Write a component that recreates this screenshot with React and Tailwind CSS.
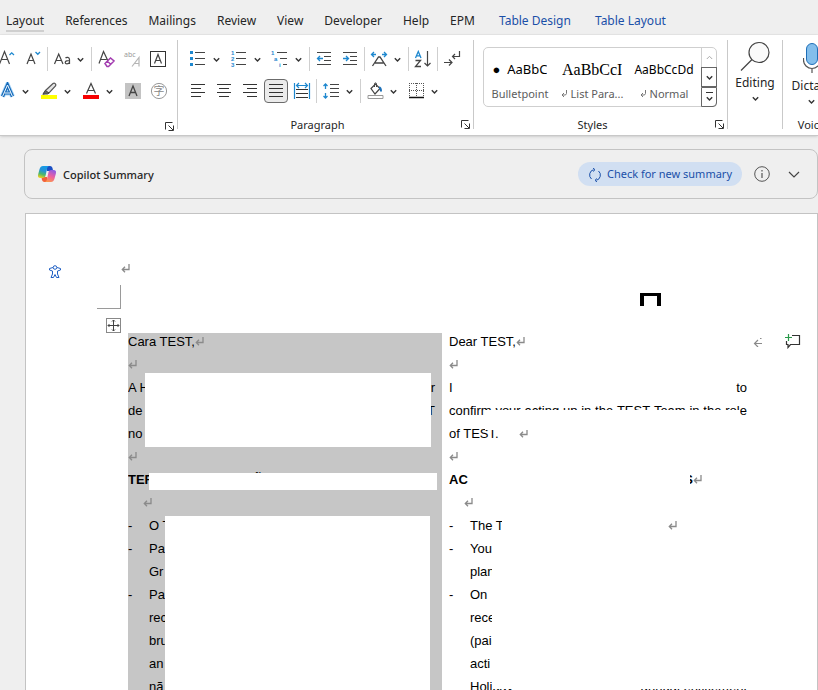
import React from "react";

const TABS = ["Layout", "References", "Mailings", "Review", "View", "Developer", "Help", "EPM"];
const TABLE_TABS = ["Table Design", "Table Layout"];

export default function App() {
  return (
    <div className="flex h-screen flex-col overflow-hidden bg-[#efefef] font-['Noto_Sans',sans-serif] text-xs text-[#252525]">
      <TabBar />
      <Ribbon />
      <main className="flex min-h-0 flex-1 flex-col pt-[13px] pl-6">
        <CopilotBar />
        <DocumentPage />
      </main>
    </div>
  );
}

function TabBar() {
  return (
    <nav className="flex h-[35px] shrink-0 gap-6 overflow-hidden border-b border-[#e6e6e6] pt-[11px] pl-1.5">
      <div className="flex shrink-0 gap-[21px]">
        {TABS.map((tab) => (
          <button
            key={tab}
            className={
              tab === "Layout"
                ? "h-[21px] shrink-0 border-b-2 border-[#cfcfcf]"
                : "h-[21px] shrink-0 border-b-2 border-transparent"
            }
          >
            {tab}
          </button>
        ))}
      </div>
      <div className="flex shrink-0 gap-6">
        {TABLE_TABS.map((tab) => (
          <button key={tab} className="h-[21px] shrink-0 border-b-2 border-transparent text-[#1a4fa8]">
            {tab}
          </button>
        ))}
      </div>
    </nav>
  );
}

/* ---------- Ribbon ---------- */

function Ribbon() {
  return (
    <header className="flex h-[101px] shrink-0 overflow-hidden border-b border-[#c8c8c8] bg-white pt-[5px] pb-1.5 shadow-sm">
      <Group className="w-[178px]" launcher="Font settings">
        <div className="flex flex-col gap-2 pt-[7px]">
          <Row>
            <Cluster>
              <Tool label="Increase font size"><GrowFont /></Tool>
              <Tool label="Decrease font size"><ShrinkFont /></Tool>
            </Cluster>
            <Sep />
            <Split label="Change case"><ChangeCase /></Split>
            <Sep />
            <Cluster>
              <Tool label="Clear formatting"><ClearFormat /></Tool>
              <Tool label="Phonetic guide"><Phonetic /></Tool>
              <Tool label="Character border"><CharBorder /></Tool>
            </Cluster>
          </Row>
          <Row>
            <div className="flex items-center gap-[9px]">
              <Split label="Text effects"><TextEffects /></Split>
              <Split label="Highlight colour"><Highlighter /></Split>
              <Split label="Font colour"><FontColor /></Split>
              <Cluster>
                <Tool label="Character shading"><CharShading /></Tool>
                <Tool label="Enclose characters"><Enclose /></Tool>
              </Cluster>
            </div>
          </Row>
        </div>
      </Group>

      <Group className="w-[296px]" title="Paragraph" launcher="Paragraph settings">
        <div className="flex flex-col gap-2 pt-[7px] pl-[11px]">
          <Row>
            <Cluster>
              <Split label="Bullets"><Bullets /></Split>
              <Split label="Numbering"><Numbering /></Split>
              <Split label="Multilevel list"><Multilevel /></Split>
            </Cluster>
            <Sep />
            <Cluster>
              <Tool label="Decrease indent"><Indent dir="left" /></Tool>
              <Tool label="Increase indent"><Indent dir="right" /></Tool>
            </Cluster>
            <Sep />
            <Split label="Asian layout"><AsianLayout /></Split>
            <Sep />
            <Tool label="Sort"><Sort /></Tool>
            <Sep />
            <Tool label="Show paragraph marks"><Marks /></Tool>
          </Row>
          <Row>
            <Cluster>
              <Tool label="Align left"><Lines rows={[[2, 16], [2, 12], [2, 16], [2, 12]]} /></Tool>
              <Tool label="Center"><Lines rows={[[2, 16], [4, 14], [2, 16], [4, 14]]} /></Tool>
              <Tool label="Align right"><Lines rows={[[2, 16], [6, 16], [2, 16], [6, 16]]} /></Tool>
              <button
                aria-label="Justify"
                aria-pressed="true"
                className="-mx-[3px] flex size-6 items-center justify-center rounded border border-[#6b6b6b] bg-[#ebebeb]"
              >
                <Lines rows={[[2, 16], [2, 16], [2, 16], [2, 16]]} />
              </button>
              <Tool label="Distribute"><Distribute /></Tool>
            </Cluster>
            <Sep />
            <Split label="Line spacing"><LineSpacing /></Split>
            <Sep />
            <Cluster>
              <Split label="Shading"><Bucket /></Split>
              <Split label="Borders"><Borders /></Split>
            </Cluster>
          </Row>
        </div>
      </Group>

      <Group className="w-[254px]" title="Styles" launcher="Styles pane">
        <div className="pt-[7px] pr-2.5 pl-[9px]">
          <StyleGallery />
        </div>
      </Group>

      <Group className="w-[55px]">
        <button className="flex w-full flex-col items-center pt-px">
          <svg className="h-[31px] w-[30px]" viewBox="0 0 30 31" fill="none" stroke="#444" strokeWidth="1.2">
            <circle cx="19" cy="11.5" r="10" fill="#fafafa" />
            <path d="M12 18.5 1 29.5" />
          </svg>
          <span className="mt-px leading-5">Editing</span>
          <span className="mt-0.5"><ChevronDown /></span>
        </button>
      </Group>

      <div className="flex w-[57px] shrink-0 flex-col">
        <button className="flex w-full flex-col items-center pt-0.5">
          <svg className="h-8 w-[18px]" viewBox="0 0 18 32" fill="none">
            <rect x="3.5" y="1.5" width="11" height="21" rx="5.5" fill="#83beec" stroke="#1f6fb8" />
            <path d="M.5 16v2a8.500 8.500 0 0 0 17 0v-2M9 26.500V31" stroke="#555" strokeWidth="1.200" />
          </svg>
          <span className="mt-0.5 leading-5">Dictate</span>
          <span className="mt-0.5"><ChevronDown /></span>
        </button>
        <span className="mt-auto -mb-1 text-center text-[11px] leading-4">Voice</span>
      </div>
    </header>
  );
}

function Group({ className, title, launcher, children }) {
  return (
    <section className={`flex shrink-0 flex-col border-r border-[#c9c9c9] ${className}`}>
      {children}
      {launcher && (
        <div className="mt-auto -mb-1 flex items-center">
          <h2 className="flex-1 text-center text-[11px] leading-4">{title}</h2>
          <button aria-label={launcher} className="flex w-4 justify-end pr-px">
            <svg className="size-3" viewBox="0 0 12 12" fill="none" stroke="#333">
              <path d="M1.500 8.500v-7h7M4.500 4.500l4.500 4.500M9.500 4.500v5h-5" />
            </svg>
          </button>
        </div>
      )}
    </section>
  );
}

function Row({ children }) {
  return <div className="flex h-6 items-center">{children}</div>;
}

function Cluster({ children }) {
  return <div className="flex items-center gap-2">{children}</div>;
}

function Sep() {
  return <div className="mx-[5px] h-6 w-px shrink-0 bg-[#cfcfcf]" />;
}

function Tool({ label, children }) {
  return (
    <button aria-label={label} className="shrink-0">
      {children}
    </button>
  );
}

function Split({ label, children }) {
  return (
    <div className="flex shrink-0 items-center gap-[3px]">
      <button aria-label={label}>{children}</button>
      <button aria-label={`${label} options`} className="flex w-3 justify-center">
        <ChevronDown />
      </button>
    </div>
  );
}

function StyleGallery() {
  return (
    <div className="flex h-[60px] rounded-[5px] border border-[#cfcfcf]">
      <div className="flex min-w-0 flex-1 text-black">
        <StyleItem name="Bulletpoint">
          <span className="text-[13px]">●&nbsp; AaBbC</span>
        </StyleItem>
        <StyleItem name="List Para..." linked>
          <span className="font-['Liberation_Serif',serif] text-base">AaBbCcI</span>
        </StyleItem>
        <StyleItem name="Normal" linked>
          <span className="text-xs">AaBbCcDd</span>
        </StyleItem>
      </div>
      <div className="-my-px -mr-px flex w-4 flex-col">
        <button aria-label="Previous styles" className="flex h-5 items-center justify-center border-l border-[#cfcfcf] text-[#aaa]">
          <svg className="size-[7px]" viewBox="0 0 7 7" fill="none" stroke="currentColor">
            <path d="M.8 5 3.500 2.300 6.200 5" />
          </svg>
        </button>
        <button aria-label="Next styles" className="flex h-5 items-center justify-center border border-[#666]">
          <ChevronDown />
        </button>
        <button aria-label="More styles" className="flex h-5 flex-col items-center justify-center gap-0.5 rounded-br border border-[#666]">
          <span className="h-px w-[7px] bg-[#333]" />
          <ChevronDown />
        </button>
      </div>
    </div>
  );
}

function StyleItem({ name, linked, children }) {
  return (
    <button className="flex w-[72px] shrink-0 flex-col items-center overflow-hidden px-1.5 pt-2.5">
      <span className="flex h-6 max-w-full items-center overflow-hidden whitespace-nowrap">{children}</span>
      <span className="flex items-center gap-1 text-[11px] leading-6 whitespace-nowrap text-[#5c5c5c]">
        {linked && (
          <svg className="h-2 w-1.5" viewBox="0 0 6 8" fill="none" stroke="#777">
            <path d="M5.500 0v3.500l-1 1.500H1M3 3 1 5l2 2" />
          </svg>
        )}
        {name}
      </span>
    </button>
  );
}

/* ---------- Icons ---------- */

function Icon({ children, narrow }) {
  return (
    <svg
      className={narrow ? "h-[18px] w-4" : "size-[18px]"}
      viewBox={narrow ? "2 0 16 18" : "0 0 18 18"}
      fill="none"
      stroke="#444"
      strokeWidth="1"
    >
      {children}
    </svg>
  );
}

function ChevronDown() {
  return (
    <svg className="block size-[7px]" viewBox="0 0 7 7" fill="none" stroke="#333" strokeWidth="1.4">
      <path d="M.8 2.200 3.500 4.900 6.200 2.200" />
    </svg>
  );
}

function GrowFont() {
  return (
    <Icon narrow>
      <path d="M1.500 14 6.500 1.500 11.500 14M3.200 9.500h6.600" strokeWidth="1.200" />
      <path d="m11.500 5 2.200-2.200L16 5" stroke="#1e88cf" strokeWidth="1.300" />
    </Icon>
  );
}

function ShrinkFont() {
  return (
    <Icon>
      <path d="M3 14 7 4l4 10M4.500 10.500h5" strokeWidth="1.200" />
      <path d="M11.500 2 13.800 4.300 16 2" stroke="#1e88cf" strokeWidth="1.300" />
    </Icon>
  );
}

function ChangeCase() {
  return (
    <Icon>
      <path d="M1.500 14 5.700 4 10 14M3 10.500h5.500" strokeWidth="1.200" />
      <path d="M12.500 8c1-1 4-1 4 1.500V14M16.500 10.500c-2 0-4.300.2-4.300 2s3.300 2 4.300-.3" strokeWidth="1.200" />
    </Icon>
  );
}

function ClearFormat() {
  return (
    <Icon>
      <path d="M2 13.500 6.500 1.500 11 11M3.500 9.500h6" strokeWidth="1.200" />
      <path d="m8 13.500 5.500-5.500 3.500 3-5.500 5.500H10zM10 11l3.500 3" fill="#fff" stroke="#a33cb0" strokeWidth="1.500" />
    </Icon>
  );
}

function Phonetic() {
  return (
    <Icon>
      <text x="1" y="7" fontSize="7" fill="#999" stroke="none">abc</text>
      <path d="m9 16.500 7-9v9M11 13.500h5" stroke="#b5b5b5" strokeWidth="1.200" />
    </Icon>
  );
}

function CharBorder() {
  return (
    <Icon>
      <rect x="1.500" y="1.500" width="15" height="15" stroke="#333" />
      <path d="m5.500 13.500 3.500-9 3.500 9M6.700 10.500h4.600" strokeWidth="1.200" />
    </Icon>
  );
}

function TextEffects() {
  return (
    <Icon narrow>
      <path d="M4.500 14.500 9.500 3l5 11.500M6.500 11h6" stroke="#a9d5f7" strokeWidth="5" />
      <path d="M4.500 14.500 9.500 3l5 11.500M6.500 11h6" stroke="#1268b8" strokeWidth="3.200" />
      <path d="M4.500 14.500 9.500 3l5 11.500M6.500 11h6" stroke="#f4faff" strokeWidth="1" />
    </Icon>
  );
}

function Highlighter() {
  return (
    <Icon>
      <path d="M5.500 8.500 13 1.500c1.500-1 3.500.5 2.500 2.500L9 11H7L3.500 12z" fill="#e4e4e4" stroke="#555" strokeWidth="1.200" />
      <path d="M5.500 8.500 9 11l-1.500 1H3z" fill="#666" />
      <path d="M1 15h16" stroke="#ffff00" strokeWidth="4" />
    </Icon>
  );
}

function FontColor() {
  return (
    <Icon>
      <path d="m4.500 11.500 4.500-10 4.500 10M6 8.500h6" strokeWidth="1.200" />
      <path d="M1 15h16" stroke="#f60000" strokeWidth="4" />
    </Icon>
  );
}

function CharShading() {
  return (
    <Icon>
      <path d="M1 1h16v16H1z" fill="#c3c3c3" stroke="none" />
      <path d="m5 14 4-10 4 10M6.500 10.500h5" strokeWidth="1.300" />
    </Icon>
  );
}

function Enclose() {
  return (
    <Icon>
      <circle cx="9" cy="9" r="7.600" stroke="#999" />
      <text
        x="9"
        y="13"
        fontSize="11"
        textAnchor="middle"
        fill="#888"
        stroke="none"
        className="font-['Noto_Sans_CJK_SC',sans-serif]"
      >
        字
      </text>
    </Icon>
  );
}

function Bullets() {
  return (
    <Icon>
      <path d="M1 2.500h3M1 8.500h3M1 14.500h3" stroke="#1e88cf" strokeWidth="3" />
      <path d="M6 2.500h10M6 8.500h10M6 14.500h10" />
    </Icon>
  );
}

function Numbering() {
  return (
    <Icon>
      <g fill="#1e88cf" stroke="none" fontSize="6" fontWeight="700" className="font-['Liberation_Sans',sans-serif]">
        <text x="1" y="5">1</text>
        <text x="1" y="11">2</text>
        <text x="1" y="17">3</text>
      </g>
      <path d="M6 2.500h10M6 8.500h10M6 14.500h10" />
    </Icon>
  );
}

function Multilevel() {
  return (
    <Icon>
      <g fill="#1e88cf" stroke="none" fontSize="6" fontWeight="700" className="font-['Liberation_Sans',sans-serif]">
        <text x="0" y="5">1</text>
        <text x="3" y="11">a</text>
        <text x="8" y="17">i</text>
      </g>
      <path d="M6 2.500h10M9 8.500h7M12 14.500h4" />
    </Icon>
  );
}

function Indent({ dir }) {
  return (
    <Icon>
      <path d="M2 2.500h14M9 6.500h7M9 10.500h7M2 14.500h14" />
      <path
        d={dir === "left" ? "M8 8.500H2.500M5 6 2.500 8.500 5 11" : "M2 8.500h5.500M5 6l2.500 2.500L5 11"}
        stroke="#1e88cf"
        strokeWidth="1.300"
      />
    </Icon>
  );
}

function AsianLayout() {
  return (
    <Icon>
      <path d="M2.500 16 8.500 7h1.500L16 16M5 13h8.500" strokeWidth="1.300" />
      <path d="M6 4.500H1.500M4 2 1.500 4.500 4 7M12 4.500h4.500M14 2l2.500 2.500L14 7" stroke="#1e88cf" strokeWidth="1.300" />
    </Icon>
  );
}

function Sort() {
  return (
    <Icon>
      <path d="M1.500 8 4.300 1.500 7 8M2.500 5.800h3.500" stroke="#1e88cf" strokeWidth="1.300" />
      <path d="M1.500 10.500h5l-5 6H7" strokeWidth="1.300" />
      <path d="M13.500 1v15M10.500 13l3 3 3-3" strokeWidth="1.200" />
    </Icon>
  );
}

function Marks() {
  return (
    <Icon>
      <path d="M16.500 1v5.500H9.500M12 4 9.500 6.500 12 9M1 12.500h8M6 9.500l3 3-3 3" strokeWidth="1.200" />
    </Icon>
  );
}

function Lines({ rows }) {
  return (
    <Icon>
      {rows.map(([from, to], i) => (
        <path key={i} d={`M${from} ${2.5 + i * 4}H${to}`} stroke="#333" />
      ))}
    </Icon>
  );
}

function Distribute() {
  return (
    <Icon>
      <path d="M1.500 1v16M16.500 1v16M3.500 3.500h11M6 1 3.500 3.500 6 6M12 1l2.500 2.500L12 6" stroke="#1e88cf" strokeWidth="1.200" />
      <path d="M3 7.500h12M3 11.500h12M3 15.500h12" stroke="#333" />
    </Icon>
  );
}

function LineSpacing() {
  return (
    <Icon>
      <path d="M3.500 2v5M1.500 4l2-2 2 2M3.500 11v5M1.500 14l2 2 2-2" stroke="#1e88cf" strokeWidth="1.300" />
      <path d="M8 2.500h9M8 6.500h9M8 10.500h9M8 14.500h9" />
    </Icon>
  );
}

function Bucket() {
  return (
    <Icon>
      <path d="m5 6.500 4.500-4.500 4.500 4.500-5 5.500z" strokeWidth="1.200" />
      <path d="M8.500 5V2c0-1.500 2-1.500 2 0v3" />
      <path d="M13 5.500c1.500 0 2 1 2 4" stroke="#1b6fb8" strokeWidth="2" />
      <path d="M2 13.500h15v3H2z" fill="#fff" stroke="#999" />
    </Icon>
  );
}

function Borders() {
  return (
    <Icon>
      <path
        d="M2 1.500h15M2 8.500h15M2.500 1v15M9.500 1v15M16.500 1v15"
        stroke="#555"
        strokeDasharray="1 1"
      />
      <path d="M2 15.500h15" stroke="#111" strokeWidth="1.500" />
    </Icon>
  );
}

/* ---------- Document ---------- */

function CopilotBar() {
  return (
    <section className="flex h-[50px] shrink-0 items-center rounded-lg border border-[#c3c3c3] px-3">
      <svg className="h-[18px] w-5 shrink-0" viewBox="0 0 20 18">
        <defs>
          <linearGradient id="cp-a" x1="0.600" y1="0" x2="0.300" y2="1">
            <stop offset="0" stopColor="#159be8" />
            <stop offset=".4" stopColor="#2493d6" />
            <stop offset=".7" stopColor="#4db86c" />
            <stop offset="1" stopColor="#f2cf1d" />
          </linearGradient>
          <linearGradient id="cp-b" x1="0.700" y1="0" x2="0.300" y2="1">
            <stop offset="0" stopColor="#8f5ae6" />
            <stop offset=".5" stopColor="#ee5fa0" />
            <stop offset="1" stopColor="#fb9a4a" />
          </linearGradient>
        </defs>
        <path d="M9 1h4c1.600 0 2.200 1 2.600 2.500L16.200 6H10z" fill="#1b4fc4" />
        <path d="M11 17H7.500c-1.700 0-2.200-1-2.600-2.500L4.500 12H10z" fill="#f2603a" />
        <path d="M6 1h6.500c-1.400 0-2 1-2.400 2.500L8.700 10c-.5 2.200-1.200 3-3 3H3.500C1.200 13 .6 11.500 1.100 9.500l1.500-5.500C3.200 2 4.300 1 6 1Z" fill="url(#cp-a)" />
        <path d="M14 17H7.500c1.400 0 2-1 2.400-2.500L11.300 8c.5-2.200 1.200-3 3-3h2.200c2.300 0 2.900 1.500 2.400 3.500L17.400 14c-.6 2-1.700 3-3.400 3Z" fill="url(#cp-b)" />
      </svg>
      <h2 className="ml-1.5 flex-1 pt-0.5 text-[11px] font-medium">Copilot Summary</h2>
      <button className="flex h-6 items-center gap-[5px] rounded-full bg-[#d1dff2] px-2.5 pt-px text-[11px] text-[#1a4fa8]">
        <svg className="size-3.5" viewBox="0 0 14 14" fill="none" stroke="currentColor">
          <path d="M8.500 12.300A5.400 5.400 0 0 0 10.500 3M5.500 1.700A5.400 5.400 0 0 0 3.500 11" />
          <path d="M5 0l2 1.700L5 3.500M9 10.500l-2 1.800L9 14" />
        </svg>
        Check for new summary
      </button>
      <button aria-label="About this summary" className="ml-3">
        <svg className="size-4" viewBox="0 0 16 16" fill="none" stroke="#555">
          <circle cx="8" cy="8" r="7.300" />
          <path d="M8 7v5M8 4v1.500" strokeWidth="1.200" />
        </svg>
      </button>
      <button aria-label="Expand summary" className="mr-[5px] ml-[18px]">
        <svg className="h-4 w-3" viewBox="0 0 12 16" fill="none" stroke="#444" strokeWidth="1.200">
          <path d="m1 6 5 5 5-5" />
        </svg>
      </button>
    </section>
  );
}

function DocumentPage() {
  return (
    <article className="mt-3.5 ml-px flex min-h-0 flex-1 flex-col border border-b-0 border-[#c3c3c3] bg-white font-['Liberation_Sans',sans-serif] text-[13px] text-black">
      <div className="flex h-[71px] shrink-0 items-end pb-1.5 pl-[22px]">
        <svg className="size-3.5" viewBox="0 0 14 14" fill="none" stroke="#1f5fc4" aria-label="Accessibility">
          <circle cx="7" cy="2.500" r="1.800" />
          <path d="M5 2.500 1.500 3.500v1.500L4.500 6v3L3 12.500h2.500L7 9.500l1.500 3H11L9.500 9V6l3-1V3.500L9 2.500" />
        </svg>
        <span className="mb-1.5 ml-[59px]"><Return /></span>
      </div>
      <div className="flex h-6 shrink-0 items-start justify-between pr-[156px] pl-[71px]">
        <div className="h-6 w-6 border-r border-b border-[#9a9a9a]" />
        <div className="mt-2 h-[13px] w-[21px] border-4 border-b-0 border-t-[3px] border-black" />
      </div>
      <div className="flex h-6 shrink-0 items-end pl-20">
        <svg className="size-[15px]" viewBox="0 0 15 15" fill="none" stroke="#444" aria-label="Move table">
          <rect x=".5" y=".5" width="14" height="14" fill="#fff" stroke="#888" />
          <path d="M7.500 2v11M2 7.500h11M6 3.500 7.500 2 9 3.500M6 11.500 7.500 13 9 11.500M3.500 6 2 7.500 3.500 9M11.500 6 13 7.500 11.500 9" />
        </svg>
      </div>
      <div className="flex min-h-0 flex-1 pl-[102px]">
        <PortugueseCell />
        <EnglishCell />
        <div className="flex flex-1 justify-end gap-[22px] pr-4">
          <svg className="mt-1 h-2.5 w-[9px]" viewBox="0 0 9 10" fill="none" stroke="#8a8a8a" strokeWidth="1.200">
            <path d="M9 6.500H1.500M5 3 1.500 6.500 5 10M7 1.500h1.500" />
          </svg>
          <button aria-label="New comment" className="self-start">
            <svg className="h-4 w-[17px]" viewBox="0 0 17 16" fill="none" stroke="#333" strokeWidth="1.200">
              <path d="M8 2.500h7.500v9H6.500L4 14.500v-3H2.500V8" />
              <path d="M4.500 1v7M1 4.500h7" stroke="#2a9a4a" />
            </svg>
          </button>
        </div>
      </div>
    </article>
  );
}

function PortugueseCell() {
  return (
    <div className="relative w-[314px] shrink-0 overflow-hidden bg-[#c6c6c6]">
      <p className="flex h-5 items-start leading-[18px]">Cara TEST,<Return inline /></p>
      <Line><Return /></Line>
      <Line className="justify-between pr-[7px]"><span>A H</span><span>r</span></Line>
      <Line className="justify-between pr-[7px]"><span>de</span><span>T</span></Line>
      <Line>no</Line>
      <Line><Return /></Line>
      <Line className="font-bold">TERMOS DA ATUAÇÃO</Line>
      <Line className="pl-[15px]"><Return /></Line>
      <Line dash>O TEST</Line>
      <Line dash>Para</Line>
      <Line className="pl-[21px]">Gr</Line>
      <Line dash>Para</Line>
      <Line className="pl-[21px]">rece</Line>
      <Line className="pl-[21px]">bruta</Line>
      <Line className="pl-[21px]">an</Line>
      <Line className="pl-[21px]">nã</Line>
      {/* blanked out areas */}
      <div className="absolute top-10 left-[17px] h-[74px] w-[286px] bg-white" />
      <div className="absolute top-[140px] left-[21px] h-[17px] w-72 bg-white" />
      <div className="absolute top-[183px] bottom-0 left-[37px] w-[265px] bg-white" />
    </div>
  );
}

function EnglishCell() {
  return (
    <div className="relative w-[305px] shrink-0 overflow-hidden pl-[7px]">
      <p className="flex h-5 items-start leading-[18px]">Dear TEST,<Return inline /></p>
      <Line><Return /></Line>
      <Line className="justify-between"><span>I</span><span>to</span></Line>
      <Line className="justify-between">
        {"confirm your acting up in the TEST Team in the role".split(" ").map((word, i) => (
          <span key={i}>{word}</span>
        ))}
      </Line>
      <Line className="gap-5">of TEST.<Return /></Line>
      <Line><Return /></Line>
      <Line className="justify-between pr-[45px] font-bold">
        <span>AC</span>
        <span className="flex items-center">S<Return /></span>
      </Line>
      <Line className="pl-[15px]"><Return /></Line>
      <Line dash className="justify-between pr-[70px]"><span>The T</span><Return /></Line>
      <Line dash>Your</Line>
      <Line className="pl-[21px]">plan</Line>
      <Line dash>On</Line>
      <Line className="pl-[21px]">receive</Line>
      <Line className="pl-[21px]">(paid</Line>
      <Line className="pl-[21px]">acti</Line>
      <Line className="justify-between pl-[21px]"><span>Holiday</span><span>annual entitlement</span></Line>
      {/* blanked out areas */}
      <div className="absolute top-[77px] left-[43px] h-5 w-[255px] bg-white" />
      <div className="absolute top-[138px] left-[200px] h-5 w-12 bg-white" />
      <div className="absolute top-[183px] left-[60px] h-5 w-20 bg-white" />
      <div className="absolute top-[204px] left-[50px] h-[152px] w-64 bg-white" />
    </div>
  );
}

function Line({ dash, className = "", children }) {
  return (
    <p className={`flex h-[23px] items-center whitespace-nowrap ${className}`}>
      {dash && <span className="w-[21px] shrink-0">-</span>}
      {dash && className ? <span className="flex flex-1 items-center justify-between">{children}</span> : children}
    </p>
  );
}

function Return({ inline }) {
  return (
    <svg
      className={inline ? "mt-1 h-[9px] w-[9px] shrink-0" : "size-[9px] shrink-0"}
      viewBox="0 0 9 9"
      fill="none"
      stroke="#8a8a8a"
      strokeWidth="1.300"
    >
      <path d="M8 0v5.500H1.500M4 2.800 1.300 5.500 4 8.200M2.500 4.500v2" />
    </svg>
  );
}
